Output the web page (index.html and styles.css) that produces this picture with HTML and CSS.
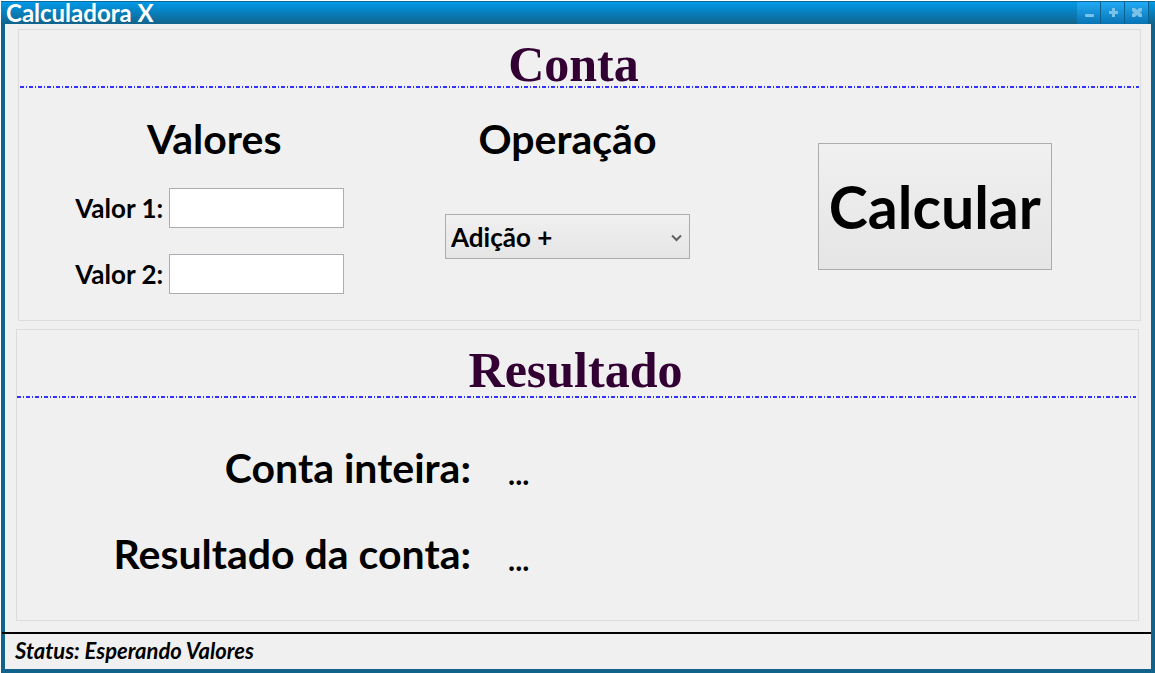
FILE: index.html
```html
<!DOCTYPE html>
<html lang="pt-BR">
<head>
<meta charset="utf-8">
<title>Calculadora X</title>
<link rel="stylesheet" href="styles.css">
</head>
<body>
<div class="window">
  <header class="titlebar">
    <h1 class="app-title">Calculadora X</h1>
    <div class="window-controls">
      <button class="control" type="button" aria-label="Minimizar">
        <svg width="24" height="22" viewBox="0 0 24 22"><rect x="8" y="12" width="9" height="3" rx="1"/></svg>
      </button>
      <button class="control" type="button" aria-label="Maximizar">
        <svg width="24" height="22" viewBox="0 0 24 22"><path d="M11 6h3v3h3v3h-3v3h-3v-3H8V9h3z"/></svg>
      </button>
      <button class="control" type="button" aria-label="Fechar">
        <svg width="24" height="22" viewBox="0 0 24 22"><path d="M7 6h3l2 2 2-2h3v3l-2 1.500 2 1.500v3h-3l-2-2-2 2H7v-3l2-1.500L7 9z"/></svg>
      </button>
    </div>
  </header>

  <main class="content">
    <section class="group group-account">
      <h2 class="group-title">Conta</h2>
      <div class="divider"></div>
      <form class="account">
        <div class="column values">
          <h3 class="subtitle">Valores</h3>
          <div class="field">
            <label for="v1">Valor 1:</label>
            <input id="v1" class="value-input" type="text">
          </div>
          <div class="field">
            <label for="v2">Valor 2:</label>
            <input id="v2" class="value-input" type="text">
          </div>
        </div>
        <div class="column operation">
          <h3 class="subtitle"><label for="op">Operação</label></h3>
          <div class="select-box">
            <select id="op" class="operation-select">
              <option>Adição +</option>
            </select>
            <svg class="chevron" width="11" height="8" viewBox="0 0 11 8"><path d="M1 1.500l4.500 4.500L10 1.500" fill="none" stroke="#606060" stroke-width="2"/></svg>
          </div>
        </div>
        <div class="column action">
          <button class="calculate" type="button">Calcular</button>
        </div>
      </form>
    </section>

    <section class="group group-result">
      <h2 class="group-title">Resultado</h2>
      <div class="divider"></div>
      <dl class="results">
        <dt>Conta inteira:</dt>
        <dd>...</dd>
        <dt>Resultado da conta:</dt>
        <dd>...</dd>
      </dl>
    </section>
  </main>

  <footer class="status">Status: Esperando Valores</footer>
</div>
</body>
</html>
```

FILE: styles.css
```css
* {
  box-sizing: border-box;
}

body {
  margin: 0;
  background: #fff;
  color: #000;
  font-family: Lato, "Liberation Sans", sans-serif;
  font-weight: bold;
}

h1, h2, h3, dl, dd {
  margin: 0;
}

button, input, select {
  font: inherit;
  color: inherit;
}

.window {
  display: flex;
  flex-direction: column;
  min-height: 100vh;
  padding: 0 4px 4px;
  border: solid #fff;
  border-width: 1px 0 0 1px;
  background: #11638c;
}

.titlebar {
  display: flex;
  align-items: center;
  justify-content: space-between;
  height: 23px;
  margin: 0 -4px;
  padding: 0 6px 0 5px;
  border-top: 1px solid #0d6798;
  background: linear-gradient(#0099e8, #11638c);
}

.app-title {
  color: #fff;
  font-size: 24px;
  line-height: 22px;
}

.window-controls {
  display: flex;
}

.control {
  width: 24px;
  height: 22px;
  padding: 0;
  border: 0;
  border-right: 1px solid #0d5f8c;
  background: linear-gradient(#22aaf6, #0874b4);
}

.control svg {
  display: block;
  fill: #7cc2e8;
}

.content {
  display: flex;
  flex: 1;
  flex-direction: column;
  gap: 8px;
  padding: 5px 0 11px;
  background: #f0f0f0;
}

.group {
  display: flex;
  flex: 1 1 0px;
  flex-direction: column;
  border: 1px solid #dcdcdc;
}

.group-account {
  margin: 0 10px 0 13px;
}

.group-result {
  margin: 0 12px 0 11px;
}

.group-title {
  padding: 12px 12px 0 0;
  color: #330033;
  font-family: "Liberation Serif", serif;
  font-size: 50px;
  line-height: 44px;
  text-align: center;
}

.group-result .group-title {
  padding: 14px 4px 0 0;
  line-height: 52px;
}

.divider {
  height: 2px;
  background: repeating-linear-gradient(to right, #3333ff 0 4px, transparent 4px 6px, #3333ff 6px 7px, transparent 7px 9px);
}

.group-account .divider {
  margin: 0 1px;
}

.group-result .divider {
  margin-right: 2px;
}

.account {
  display: grid;
  flex: 1;
  grid-template-columns: 39fr 32fr 41fr;
}

.column {
  display: flex;
  flex-direction: column;
  align-items: center;
  min-width: 0;
  padding-top: 26px;
}

.values {
  padding-right: 15px;
}

.operation {
  padding-right: 4px;
}

.subtitle {
  font-size: 41px;
  line-height: 50px;
}

.values .subtitle {
  padding-left: 15px;
}

.field {
  display: flex;
  align-items: center;
  justify-content: flex-end;
  gap: 6px;
  width: 275px;
  margin-top: 24px;
  font-size: 26px;
  line-height: 40px;
  white-space: nowrap;
}

.field + .field {
  margin-top: 26px;
}

.value-input {
  width: 175px;
  height: 40px;
  padding: 0 6px;
  border: 1px solid #abadb3;
  background: #fff;
}

.select-box {
  position: relative;
  width: 245px;
  margin-top: 50px;
}

.operation-select {
  appearance: none;
  display: block;
  width: 100%;
  height: 45px;
  padding: 0 5px;
  border: 1px solid #acacac;
  border-radius: 0;
  background: linear-gradient(#f0f0f0, #e5e5e5);
  font-size: 26px;
}

.chevron {
  position: absolute;
  top: 20px;
  right: 8px;
  pointer-events: none;
}

.action {
  padding-top: 55px;
}

.calculate {
  width: 234px;
  height: 127px;
  padding: 0;
  border: 1px solid #acacac;
  background: linear-gradient(#f0f0f0, #e5e5e5);
  font-size: 59px;
}

.results {
  display: grid;
  grid-template-columns: 454px 1fr;
  column-gap: 37px;
  row-gap: 26px;
  padding-top: 40px;
  font-size: 41px;
  line-height: 60px;
}

.results dt {
  text-align: right;
  white-space: nowrap;
}

.results dd {
  padding-top: 10px;
  font-size: 30px;
  line-height: 50px;
}

.status {
  margin-left: -3px;
  padding: 1px 12px 2px 13px;
  border-top: 2px solid #000;
  background: linear-gradient(to right, #11638c 3px, #f0f0f0 3px);
  font-size: 22px;
  font-style: italic;
  line-height: 32px;
}
```
